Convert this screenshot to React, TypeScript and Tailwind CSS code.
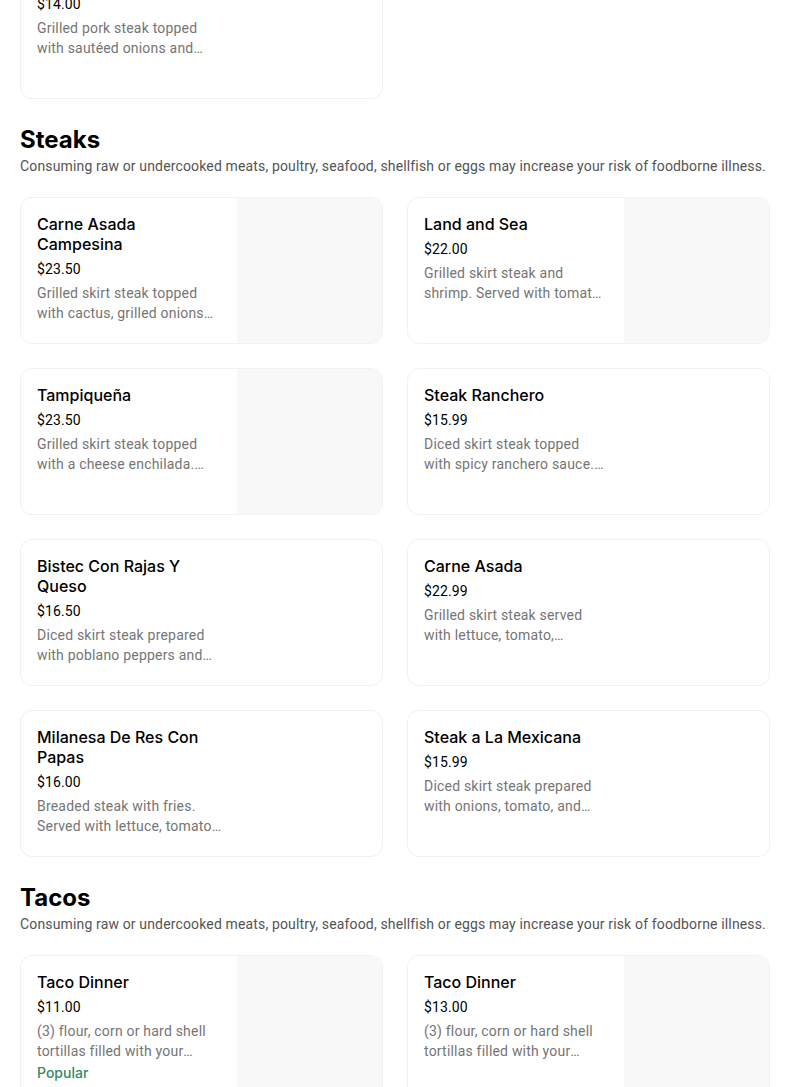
import React from 'react';

type Item = {
  name: string;
  price: string;
  desc: string;
  image?: boolean;
  popular?: boolean;
};

const WARNING =
  'Consuming raw or undercooked meats, poultry, seafood, shellfish or eggs may increase your risk of foodborne illness.';

const porkItems: Item[] = [
  { name: 'Bistec de Puerco', price: '$14.00', desc: 'Grilled pork steak topped with sautéed onions and tomatoes.' },
];

const steaks: Item[] = [
  { name: 'Carne Asada Campesina', price: '$23.50', desc: 'Grilled skirt steak topped with cactus, grilled onions and jalapeños.', image: true },
  { name: 'Land and Sea', price: '$22.00', desc: 'Grilled skirt steak and shrimp. Served with tomato rice and beans.', image: true },
  { name: 'Tampiqueña', price: '$23.50', desc: 'Grilled skirt steak topped with a cheese enchilada. Served with rice.', image: true },
  { name: 'Steak Ranchero', price: '$15.99', desc: 'Diced skirt steak topped with spicy ranchero sauce. Served with rice.' },
  { name: 'Bistec Con Rajas Y Queso', price: '$16.50', desc: 'Diced skirt steak prepared with poblano peppers and melted cheese.' },
  { name: 'Carne Asada', price: '$22.99', desc: 'Grilled skirt steak served with lettuce, tomato, avocado and rice.' },
  { name: 'Milanesa De Res Con Papas', price: '$16.00', desc: 'Breaded steak with fries. Served with lettuce, tomato and avocado.' },
  { name: 'Steak a La Mexicana', price: '$15.99', desc: 'Diced skirt steak prepared with onions, tomato, and jalapeños.' },
];

const tacos: Item[] = [
  { name: 'Taco Dinner', price: '$11.00', desc: '(3) flour, corn or hard shell tortillas filled with your choice of meat.', image: true, popular: true },
  { name: 'Taco Dinner', price: '$13.00', desc: '(3) flour, corn or hard shell tortillas filled with your choice of meat.', image: true },
];

const body = { fontFamily: 'Roboto, "Noto Sans", sans-serif' };

const ItemCard = ({ item }: { item: Item }) => (
  <div className="flex h-[147px] overflow-hidden rounded-xl border border-[#f1f1f1] bg-white">
    <div className="flex-1 min-w-0 px-4 pt-4">
      <div className="w-[184px]">
        <div className="text-base leading-5 font-medium text-black line-clamp-2">{item.name}</div>
        <div className="mt-[5px] text-sm leading-5 text-black tracking-[0.1px]" style={body}>
          {item.price}
        </div>
        <div className="mt-1 text-sm leading-5 text-[#757575] tracking-[0.2px] line-clamp-2" style={body}>
          {item.desc}
        </div>
        {item.popular && (
          <div className="mt-0.5 text-sm leading-5 font-medium text-[#358a5e]">Popular</div>
        )}
      </div>
    </div>
    {item.image && <div className="w-[145px] shrink-0 bg-[#f8f8f8]" />}
  </div>
);

const Section = ({ title, items }: { title: string; items: Item[] }) => (
  <div className="mt-[25px]">
    <h2 className="text-2xl leading-8 font-bold text-black">{title}</h2>
    <p className="text-sm leading-5 text-[#545454] whitespace-nowrap tracking-[0.15px]" style={body}>
      {WARNING}
    </p>
    <div className="mt-[21px] grid grid-cols-2 gap-6">
      {items.map((item, i) => (
        <ItemCard key={title + i} item={item} />
      ))}
    </div>
  </div>
);

export default function App() {
  return (
    <div
      className="h-[1087px] overflow-hidden bg-white"
      style={{ fontFamily: 'Inter, "Noto Sans", sans-serif' }}
    >
      <div className="ml-5 w-[750px] mt-[-48px]">
        <div className="grid grid-cols-2 gap-6">
          {porkItems.map((item, i) => (
            <ItemCard key={i} item={item} />
          ))}
        </div>
        <Section title="Steaks" items={steaks} />
        <Section title="Tacos" items={tacos} />
      </div>
    </div>
  );
}
